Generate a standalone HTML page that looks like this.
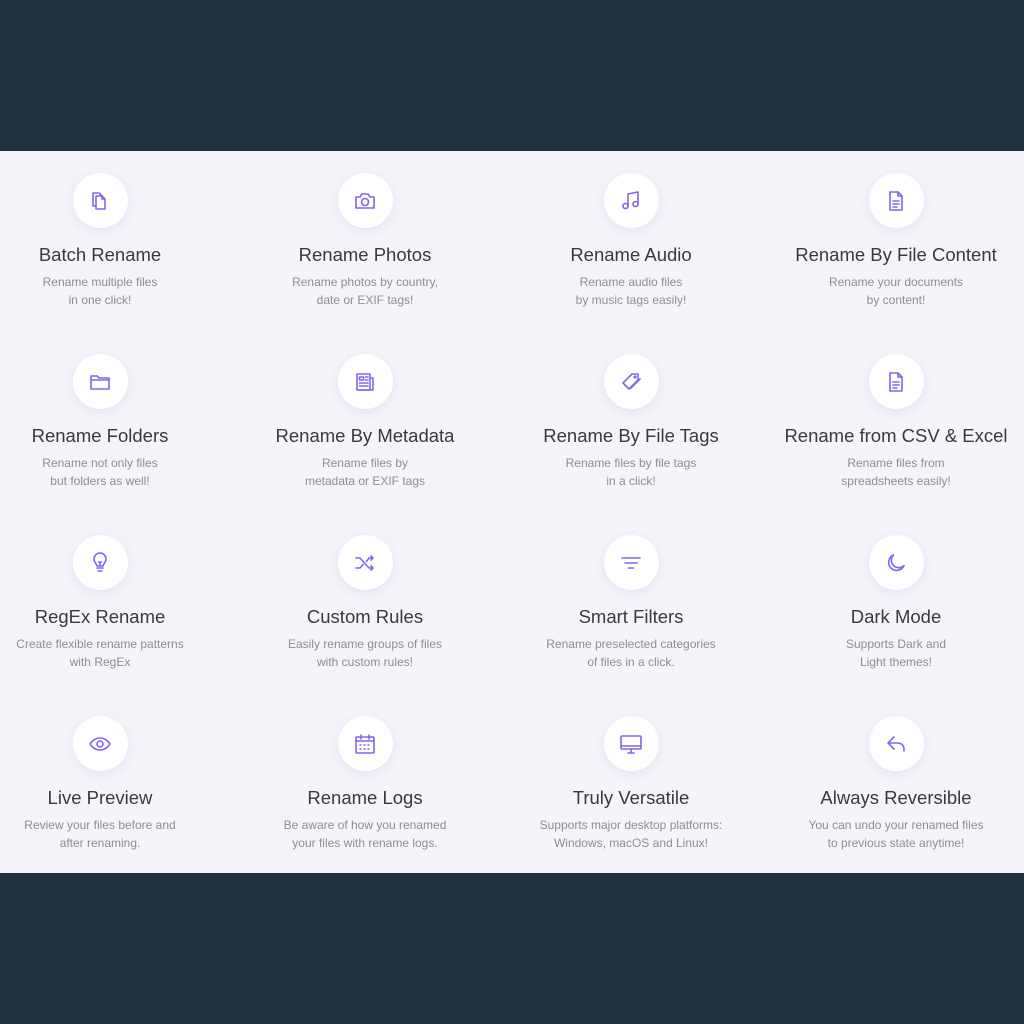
<!DOCTYPE html>
<html><head><meta charset="utf-8"><style>
html,body{margin:0;padding:0;width:1024px;height:1024px;background:#1f313d;overflow:hidden;font-family:"Liberation Sans",Arial,sans-serif}
.panel{position:absolute;left:0;top:151px;width:1024px;height:722px;background:#f4f4fa}
.item{position:absolute;width:266px;text-align:center}
.c{width:55px;height:55px;border-radius:50%;background:#fff;margin:0 auto;box-shadow:0 3px 10px rgba(120,110,200,.12);display:flex;align-items:center;justify-content:center}
.c svg{width:24px;height:24px;fill:none;stroke:#7b68f0;stroke-width:1.6;stroke-linecap:round;stroke-linejoin:round}
.t{font-size:18.5px;color:#3a3a3a;margin-top:16px;line-height:22px}
.d{font-size:12px;color:#8d8d95;margin-top:7px;line-height:18px}
</style></head><body>
<div class="panel"></div>
<div id="g"></div>
<script>
var items=[
["Batch Rename","Rename multiple files<br>in one click!",'<path d="M8 7h6l3 3v10H8z"/><path d="M14 7v3h3"/><path d="M8 17H5V4h6l3 3"/>'],
["Rename Photos","Rename photos by country,<br>date or EXIF tags!",'<path d="M3 8h4l2-3h6l2 3h4v11H3z"/><circle cx="12" cy="13" r="3.5"/>'],
["Rename Audio","Rename audio files<br>by music tags easily!",'<path d="M9 17V5l10-2v12"/><circle cx="6.5" cy="17" r="2.5"/><circle cx="16.5" cy="15" r="2.5"/>'],
["Rename By File Content","Rename your documents<br>by content!",'<path d="M6 3h8l4 4v14H6z"/><path d="M14 3v4h4M9 12h6M9 15h6M9 18h4"/>'],
["Rename Folders","Rename not only files<br>but folders as well!",'<path d="M3 6h6l2 2h10v11H3z"/><path d="M3 10h18"/>'],
["Rename By Metadata","Rename files by<br>metadata or EXIF tags",'<path d="M4 4h13v16H4z"/><path d="M17 8h3v12H6"/><rect x="6.5" y="7" width="4" height="3"/><path d="M12.5 7h2.5M12.5 10h2.5M6.5 13h8.5M6.5 16h8.5"/>'],
["Rename By File Tags","Rename files by file tags<br>in a click!",'<path d="M13 4h6v6l-9 9-6-6z"/><circle cx="16" cy="7" r="0.8"/><path d="M21 9l-9 9"/>'],
["Rename from CSV & Excel","Rename files from<br>spreadsheets easily!",'<path d="M6 3h8l4 4v14H6z"/><path d="M14 3v4h4M9 12h6M9 15h6M9 18h4"/>'],
["RegEx Rename","Create flexible rename patterns<br>with RegEx",'<path d="M9 17h6M10 20h4"/><path d="M9 15c0-2-3-3.5-3-7a6 6 0 0112 0c0 3.5-3 5-3 7z"/><path d="M12 15v-4M10.5 11h3"/>'],
["Custom Rules","Easily rename groups of files<br>with custom rules!",'<path d="M3 7h4l9 10h4M3 17h4l3-3.5M13.5 10.5L16 7h4M18 5l2 2-2 2M18 15l2 2-2 2"/>'],
["Smart Filters","Rename preselected categories<br>of files in a click.",'<path d="M3 7h18M6 12h12M9.5 17h5"/>'],
["Dark Mode","Supports Dark and<br>Light themes!",'<path d="M20 14.5A8 8 0 119.5 4a6.5 6.5 0 0010.5 10.5z"/>'],
["Live Preview","Review your files before and<br>after renaming.",'<path d="M2 12s3.5-6 10-6 10 6 10 6-3.5 6-10 6S2 12 2 12z"/><circle cx="12" cy="12" r="3"/>'],
["Rename Logs","Be aware of how you renamed<br>your files with rename logs.",'<rect x="3" y="5" width="18" height="16" rx="1"/><path d="M3 9h18M8 3v4M16 3v4M7 13h1M11 13h1M15 13h1M7 17h1M11 17h1M15 17h1"/>'],
["Truly Versatile","Supports major desktop platforms:<br>Windows, macOS and Linux!",'<rect x="2" y="4" width="20" height="13" rx="1"/><path d="M2 14h20M9 21h6M12 17v4"/>'],
["Always Reversible","You can undo your renamed files<br>to previous state anytime!",'<path d="M10 5L4 11l6 6M4 11h10a6 6 0 016 6v2"/>']
];
var cx=[100,365,631,896],cy=[173,354,535,716],h="";
items.forEach(function(it,i){var col=i%4,row=Math.floor(i/4);
h+='<div class="item" style="left:'+(cx[col]-133)+'px;top:'+cy[row]+'px"><div class="c"><svg viewBox="0 0 24 24">'+it[2]+'</svg></div><div class="t">'+it[0].replace("&","&amp;")+'</div><div class="d">'+it[1]+'</div></div>';});
document.getElementById("g").innerHTML=h;
</script>
</body></html>
